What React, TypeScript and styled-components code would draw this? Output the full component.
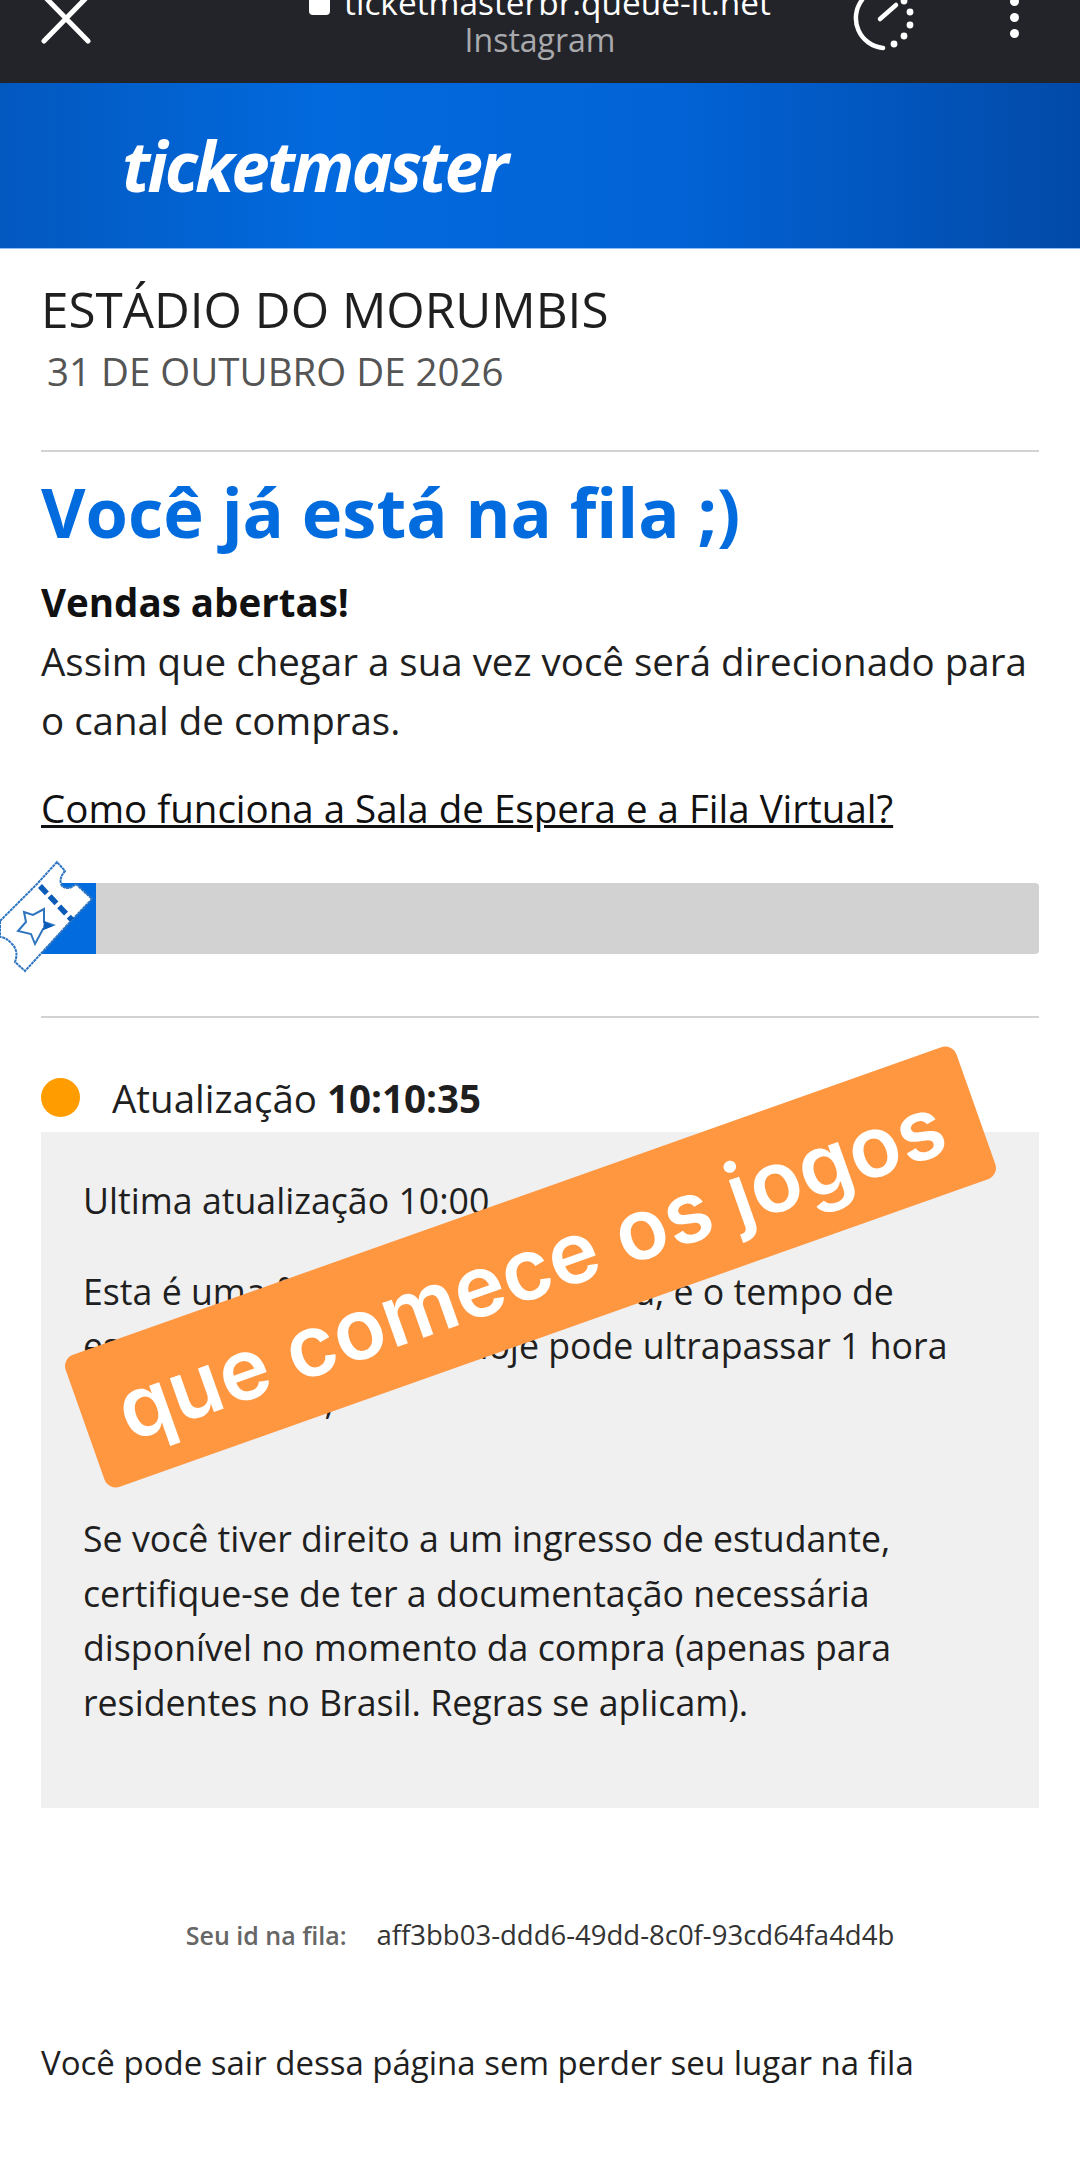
import React from 'react';
import styled, { createGlobalStyle } from 'styled-components';

const App = () => {
  return (
    <Page>
      <GlobalStyle />
      <BrowserBar>
        <CloseIcon viewBox="0 0 48 48">
          <path d="M2 -4 L46 41 M46 -4 L2 41" />
        </CloseIcon>
        <UrlBlock>
          <UrlLine>
            <Lock />
            ticketmasterbr.queue-it.net
          </UrlLine>
          <SourceLine>Instagram</SourceLine>
        </UrlBlock>
        <TimerIcon viewBox="0 0 70 60">
          <path d="M12 0 A30 30 0 0 0 33 48" />
          <path d="M30 19 L46 5" />
          <circle cx="54" cy="1" r="3.4" />
          <circle cx="60" cy="12" r="3.4" />
          <circle cx="60" cy="25" r="3.4" />
          <circle cx="54" cy="36" r="3.4" />
          <circle cx="44" cy="44" r="3.4" />
        </TimerIcon>
        <MenuDots>
          <Dot />
          <Dot />
          <Dot />
        </MenuDots>
      </BrowserBar>
      <Banner>
        <Logo>ticketmaster</Logo>
      </Banner>
      <Content>
        <Venue>ESTÁDIO DO MORUMBIS</Venue>
        <EventDate>31 DE OUTUBRO DE 2026</EventDate>
        <Rule />
        <Heading>Você já está na fila ;)</Heading>
        <Lead>Vendas abertas!</Lead>
        <Paragraph>Assim que chegar a sua vez você será direcionado para o canal de compras.</Paragraph>
        <HelpLink>Como funciona a Sala de Espera e a Fila Virtual?</HelpLink>
        <Progress>
          <ProgressFill />
          <Ticket viewBox="0 0 100 140">
            <path
              d="M0 82 L37 45 L57 23 L65 32 Q58 40 62 47 Q68 52 76 45 L92 60 L70 83 L25 132 L15 123 Q19 112 12 105 Q6 98 0 98 Z"
              fill="#fff"
              stroke="#2f74bf"
              strokeWidth="2"
              strokeDasharray="3 0.6"
            />
            <path d="M40 47 L72 81" fill="none" stroke="#0b5cb8" strokeWidth="5.5" strokeDasharray="10 4" />
            <path
              d="M44 70 L44 83 L53 86 L43 90 L35 105 L31 95 L18 92 L26 83 L24 73 L33 76 Z"
              fill="#fff"
              stroke="#2f74bf"
              strokeWidth="2"
            />
            <path d="M44 82 L53 87 L43 91 Z" fill="#0b5cb8" />
          </Ticket>
        </Progress>
        <Rule $top={62} />
        <StatusRow>
          <StatusDot />
          <StatusText>
            Atualização <b>10:10:35</b>
          </StatusText>
        </StatusRow>
        <InfoPanel>
          <PanelText $gap={36}>Ultima atualização 10:00</PanelText>
          <PanelText $gap={84}>
            Esta é uma fila bastante disputada, e o tempo de espera calculado, para hoje pode ultrapassar 1 hora ou mais
            de fila;
          </PanelText>
          <PanelText>
            Se você tiver direito a um ingresso de estudante, certifique-se de ter a documentação necessária disponível
            no momento da compra (apenas para residentes no Brasil. Regras se aplicam).
          </PanelText>
        </InfoPanel>
        <QueueId>
          <QueueLabel>Seu id na fila:</QueueLabel>
          <QueueValue>aff3bb03-ddd6-49dd-8c0f-93cd64fa4d4b</QueueValue>
        </QueueId>
        <LeaveNote>Você pode sair dessa página sem perder seu lugar na fila</LeaveNote>
      </Content>
      <Sticker>que comece os jogos</Sticker>
    </Page>
  );
};

export default App;

const GlobalStyle = createGlobalStyle`
  html, body {
    margin: 0;
    background: #fff;
  }
`;

const Page = styled.div`
  position: relative;
  width: 1080px;
  height: 2160px;
  overflow: hidden;
  background: #fff;
  color: #1f1f1f;
  font-family: 'Open Sans', 'Noto Sans', sans-serif;
`;

const BrowserBar = styled.div`
  display: flex;
  align-items: flex-start;
  height: 83px;
  overflow: hidden;
  background: #232429;
`;

const CloseIcon = styled.svg`
  width: 48px;
  height: 48px;
  margin-left: 42px;
  flex: none;
  overflow: visible;

  path {
    fill: none;
    stroke: #fff;
    stroke-width: 5;
    stroke-linecap: round;
  }
`;

const UrlBlock = styled.div`
  display: flex;
  flex-direction: column;
  align-items: center;
  flex: none;
  width: 640px;
  margin: -17px 0 0 130px;
`;

const UrlLine = styled.div`
  display: flex;
  align-items: center;
  gap: 14px;
  height: 38px;
  color: #fff;
  font-size: 33.4px;
  line-height: 38px;
  white-space: nowrap;
`;

const Lock = styled.span`
  display: block;
  width: 21px;
  height: 26px;
  border-radius: 4px;
  background: #fff;
`;

const SourceLine = styled.div`
  color: #a9aaad;
  font-size: 32px;
  line-height: 38px;
`;

const TimerIcon = styled.svg`
  width: 70px;
  height: 60px;
  flex: none;
  margin-left: -10px;
  overflow: visible;

  path {
    fill: none;
    stroke: #fff;
    stroke-width: 4.5;
    stroke-linecap: round;
  }

  circle {
    fill: #fff;
  }
`;

const MenuDots = styled.div`
  display: flex;
  flex-direction: column;
  gap: 7px;
  margin: -3px 0 0 90px;
`;

const Dot = styled.span`
  display: block;
  width: 9px;
  height: 9px;
  border-radius: 50%;
  background: #fff;
`;

const Banner = styled.header`
  display: flex;
  align-items: center;
  height: 166px;
  padding-left: 122px;
  background: linear-gradient(90deg, #0358bf 0%, #026ade 30%, #0263d6 62%, #024aa8 100%);
  border-bottom: 1px solid #8fbdf0;
  box-sizing: border-box;
`;

const Logo = styled.div`
  color: #fff;
  font-size: 69px;
  font-weight: 700;
  font-style: italic;
  letter-spacing: -3px;
  line-height: 1;
`;

const Content = styled.main`
  padding: 0 41px;
`;

const Venue = styled.h2`
  margin: 32px 0 0;
  font-size: 49.4px;
  font-weight: 400;
  line-height: 56px;
  white-space: nowrap;
`;

const EventDate = styled.div`
  margin: 11px 0 0 6px;
  color: #555;
  font-size: 38.5px;
  line-height: 46px;
`;

const Rule = styled.hr<{ $top?: number }>`
  margin: ${(p) => p.$top ?? 56}px 0 0;
  border: 0;
  border-top: 2px solid #d2d2d2;
`;

const Heading = styled.h1`
  margin: 16px 0 0;
  color: #026cdf;
  font-size: 68.6px;
  font-weight: 700;
  line-height: 88px;
`;

const Lead = styled.div`
  margin-top: 22px;
  color: #111;
  font-size: 38.5px;
  font-weight: 700;
  line-height: 48px;
`;

const Paragraph = styled.p`
  margin: 6px 0 0;
  font-size: 38.5px;
  line-height: 59px;
`;

const HelpLink = styled.a`
  display: block;
  margin-top: 28px;
  color: #111;
  font-size: 38.5px;
  line-height: 60px;
  text-decoration: underline;
`;

const Progress = styled.div`
  position: relative;
  height: 71px;
  margin-top: 45px;
  border-radius: 4px;
  background: #d2d2d2;
`;

const ProgressFill = styled.div`
  width: 55px;
  height: 100%;
  background: #026cdf;
`;

const Ticket = styled.svg`
  position: absolute;
  left: -41px;
  top: -44px;
  width: 100px;
  height: 140px;
`;

const StatusRow = styled.div`
  display: flex;
  align-items: flex-end;
  box-sizing: border-box;
  height: 114px;
  padding-bottom: 8px;
`;

const StatusDot = styled.span`
  flex: none;
  width: 39px;
  height: 39px;
  margin: 0 32px 7px 0;
  border-radius: 50%;
  background: #ff9d00;
`;

const StatusText = styled.div`
  font-size: 38.5px;
  line-height: 52px;

  b {
    font-weight: 700;
  }
`;

const InfoPanel = styled.section`
  box-sizing: border-box;
  height: 676px;
  padding: 41px 42px 0;
  background: #f0f0f0;
`;

const PanelText = styled.p<{ $gap?: number }>`
  margin: 0 0 ${(p) => p.$gap ?? 0}px;
  font-size: 35.7px;
  line-height: 54.5px;
`;

const QueueId = styled.div`
  display: flex;
  justify-content: center;
  gap: 30px;
  margin-top: 110px;
  line-height: 34px;
  white-space: nowrap;
`;

const QueueLabel = styled.span`
  color: #666;
  font-size: 25px;
  font-weight: 600;
`;

const QueueValue = styled.span`
  color: #333;
  font-size: 27.5px;
`;

const LeaveNote = styled.div`
  margin-top: 89px;
  font-size: 33px;
  line-height: 44px;
`;

const Sticker = styled.div`
  position: absolute;
  left: 58px;
  top: 1197px;
  display: flex;
  align-items: center;
  justify-content: center;
  width: 945px;
  height: 140px;
  border-radius: 12px;
  background: #ff9640;
  color: #fff;
  font-family: 'Inter', 'Liberation Sans', sans-serif;
  font-size: 85px;
  font-weight: 600;
  white-space: nowrap;
  transform: rotate(-19.5deg);
`;
